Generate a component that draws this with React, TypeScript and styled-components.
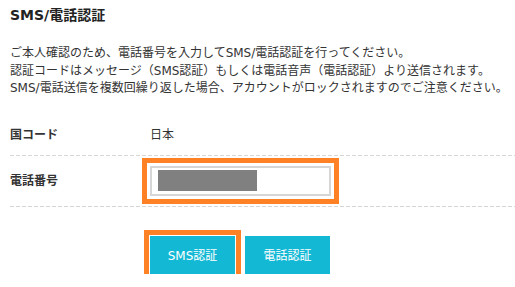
import React from "react";
import styled, { createGlobalStyle, css } from "styled-components";

const GlobalStyle = createGlobalStyle`
  html, body { margin: 0; padding: 0; background: #fff; }
  body {
    font-family: "DejaVu Sans", "Noto Sans CJK JP", sans-serif;
    color: #333;
  }
`;

const highlight = css`
  outline: 5px solid #ff8126;
`;

const Page = styled.main`
  width: 515px;
  box-sizing: border-box;
  padding: 5px 0 0 10px;
`;

const Title = styled.h1`
  margin: 0;
  font-size: 14px;
  line-height: 20px;
  font-weight: 700;
  color: #222;
`;

const Lead = styled.p`
  margin: 20px 0 0;
  font-size: 12px;
  line-height: 17.5px;
  white-space: nowrap;
`;

const Table = styled.dl`
  margin: 15px 0 0;
`;

const Row = styled.div<{ $compact?: boolean }>`
  display: grid;
  grid-template-columns: 140px 1fr;
  align-items: center;
  padding: ${(p) => (p.$compact ? "11px 0 10px" : "10px 0 11px")};
  background-image: repeating-linear-gradient(
    to right,
    #d6d6d6 0 4px,
    transparent 4px 6px
  );
  background-size: 100% 1px;
  background-position: left bottom;
  background-repeat: no-repeat;
`;

const Label = styled.dt`
  font-size: 12px;
  line-height: 22px;
  font-weight: 700;
  color: #333;
`;

const Value = styled.dd`
  margin: 0;
  font-size: 12px;
  line-height: 22px;
  color: #333;
`;

const PhoneField = styled.div`
  box-sizing: border-box;
  width: 181px;
  height: 30px;
  border: 2px solid #d6d6d6;
  background: #fff;
  padding: 0 6px;
  display: flex;
  align-items: center;
  ${highlight};
  outline-offset: 3px;
`;

const Redacted = styled.span`
  display: block;
  width: 99px;
  height: 21px;
  background: #808080;
`;

const Actions = styled.div`
  display: flex;
  gap: 10px;
  margin-top: 29px;
  padding-left: 140px;
`;

const ActionButton = styled.button<{ $highlighted?: boolean }>`
  width: 85px;
  height: 38px;
  border: none;
  background: #13b8d5;
  color: #fff;
  font-family: inherit;
  font-size: 12px;
  padding: 0;
  cursor: pointer;
  ${(p) =>
    p.$highlighted &&
    css`
      ${highlight};
      outline-offset: 1px;
    `}
`;

export default function App() {
  return (
    <>
      <GlobalStyle />
      <Page>
        <Title>SMS/電話認証</Title>
        <Lead>
          ご本人確認のため、電話番号を入力してSMS/電話認証を行ってください。
          <br />
          認証コードはメッセージ（SMS認証）もしくは電話音声（電話認証）より送信されます。
          <br />
          SMS/電話送信を複数回繰り返した場合、アカウントがロックされますのでご注意ください。
        </Lead>
        <Table>
          <Row $compact>
            <Label>国コード</Label>
            <Value>日本</Value>
          </Row>
          <Row>
            <Label>電話番号</Label>
            <Value>
              <PhoneField>
                <Redacted />
              </PhoneField>
            </Value>
          </Row>
        </Table>
        <Actions>
          <ActionButton $highlighted>SMS認証</ActionButton>
          <ActionButton>電話認証</ActionButton>
        </Actions>
      </Page>
    </>
  );
}
